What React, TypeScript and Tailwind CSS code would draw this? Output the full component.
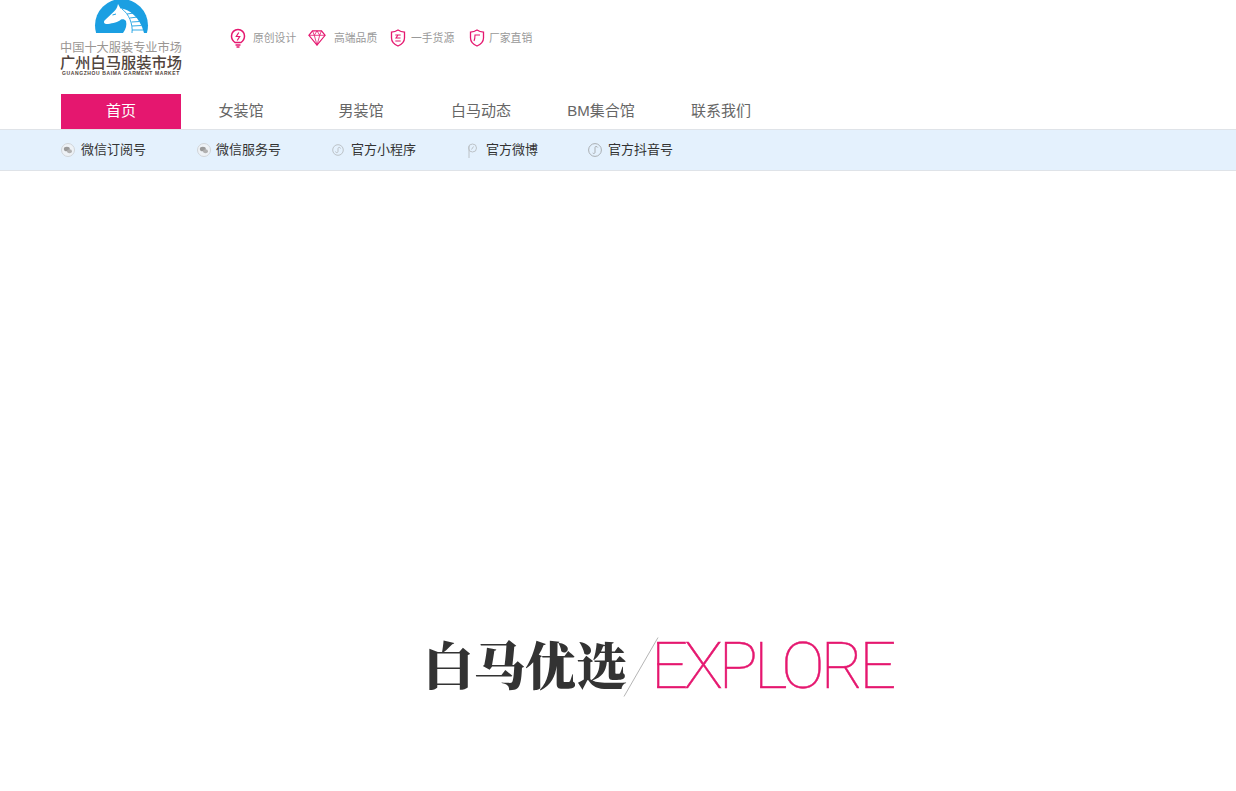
const sans = "font-['Liberation_Sans','Noto_Sans_CJK_SC',sans-serif]";

function Horse() {
  return (
    <svg width="62" height="33" viewBox="0 0 62 33" className="block">
      <circle cx="31.500" cy="25.500" r="26.500" fill="#1b9fe2" />
      <path d="M28 4l2.500 4.500C39 9 50 17 54 33H33c3-4 4-8 3-12-1.500-2-3-2-5-1.500-3 3-8 3.500-13 4.500-3 .5-5-1-3.500-3.500L24 11.500c2-2 3.500-4.500 4-7.500z" fill="#fff" />
      <path d="M32 9C39 14 43 24 42 33" stroke="#1b9fe2" strokeWidth="0.900" fill="none" />
      <path d="M37 14l7-1M40 18l7.500-1M41.500 22l8-.5M42 26l9.500-.5M42 30h11" stroke="#1b9fe2" strokeWidth="0.900" fill="none" />
      <path d="M22.500 15l3.500-1" stroke="#1b9fe2" strokeWidth="1" />
    </svg>
  );
}

function Bulb() {
  return (
    <svg width="16" height="20" viewBox="0 0 16 20" fill="none" stroke="#e5176f" strokeWidth="1.500">
      <path d="M5 14.500C3 13 1.500 11 1.500 8a6.500 6.500 0 0 1 13 0c0 3-1.500 5-3.500 6.500z" />
      <path d="M8.800 4.500 6.300 8.500h3.400L7.200 12.500" strokeWidth="1.200" />
      <path d="M5.500 17h5M6.500 19h3" />
    </svg>
  );
}

function Diamond() {
  return (
    <svg width="18" height="18" viewBox="0 0 20 18" fill="none" stroke="#e5176f" strokeWidth="1.300">
      <path d="M5 1h10l4 5-9 11L1 6z" />
      <path d="M1 6h18M5 1l2 5 3 11 3-11 2-5M7 6l3-5 3 5" strokeWidth=".9" />
    </svg>
  );
}

function Shield({ glyph }: { glyph: "e" | "c" }) {
  return (
    <svg width="16" height="18" viewBox="0 0 16 18" fill="none" stroke="#e5176f" strokeWidth="1.300">
      <path d="M8 1c2 1.300 4.300 2 6.500 2.200V9c0 3.500-2.800 6.300-6.500 8-3.700-1.700-6.500-4.500-6.500-8V3.200C3.700 3 6 2.300 8 1z" />
      {glyph === "e" ? (
        <path d="M5.300 6h5.400M8 6l-2 3h4.500M5.300 12h5.400" strokeWidth="1.100" />
      ) : (
        <path d="M11 6H6c0 2.500-.3 4.500-1 6" strokeWidth="1.100" />
      )}
    </svg>
  );
}

function Wechat() {
  return (
    <svg width="14" height="14" viewBox="0 0 14 14">
      <circle cx="7" cy="7" r="6.500" fill="#eef2f6" stroke="#d0d4d8" />
      <ellipse cx="5.800" cy="6" rx="3" ry="2.300" fill="#9a9a9a" />
      <ellipse cx="8.500" cy="8.300" rx="2.500" ry="2" fill="#b1b1b1" />
    </svg>
  );
}

function Mini() {
  return (
    <svg width="12" height="12" viewBox="0 0 12 12" fill="none" stroke="#bcc2c7">
      <circle cx="6" cy="6" r="5.300" />
      <path d="M3.500 7.500c0 1.500 2.500 1.500 2.500 0v-3c0-1.500 2.500-1.500 2.500 0" />
    </svg>
  );
}

function Weibo() {
  return (
    <svg width="10" height="15" viewBox="0 0 10 15" fill="none" stroke="#bcc2c7">
      <circle cx="5.500" cy="5" r="4" />
      <path d="M2 3v12" />
      <path d="M4.500 6.500 6.500 3.500" />
    </svg>
  );
}

function Tiktok() {
  return (
    <svg width="14" height="14" viewBox="0 0 14 14" fill="none" stroke="#a9aeb2">
      <circle cx="7" cy="7" r="6.400" />
      <path d="M8 3.500c-.7 0-1 .4-1 1v5c0 1-1.800 1.300-2.300.5M8 3.500c1 0 1.500.5 1.800 1" />
    </svg>
  );
}

const features = [
  { icon: <Bulb />, label: "原创设计", w: "w-[78px]", gap: "gap-[7px]" },
  { icon: <Diamond />, label: "高端品质", w: "w-[82px]", gap: "gap-[8px]" },
  { icon: <Shield glyph="e" />, label: "一手货源", w: "w-[79px]", gap: "gap-[5px]" },
  { icon: <Shield glyph="c" />, label: "厂家直销", w: "w-[70px]", gap: "gap-[4px]" },
];

const navs = ["首页", "女装馆", "男装馆", "白马动态", "BM集合馆", "联系我们"];

const subs = [
  { icon: <Wechat />, label: "微信订阅号", w: "w-[136px]", gap: "gap-[6px]" },
  { icon: <Wechat />, label: "微信服务号", w: "w-[135px]", gap: "gap-[5px]" },
  { icon: <Mini />, label: "官方小程序", w: "w-[135px]", gap: "gap-[7px]" },
  { icon: <Weibo />, label: "官方微博", w: "w-[121px]", gap: "gap-[9px]" },
  { icon: <Tiktok />, label: "官方抖音号", w: "w-[100px]", gap: "gap-[6px]" },
];

export default function App() {
  return (
    <div className={`min-h-[791px] bg-white overflow-hidden ${sans}`}>
      <header className="h-[94px] pl-[60px] flex items-start">
        <div className="w-[122px] flex flex-col items-center">
          <Horse />
          <div className="mt-[9px] text-[12.200px] leading-[13px] text-[#9a9693] whitespace-nowrap">中国十大服装专业市场</div>
          <div className="text-[15.250px] leading-[15px] font-medium text-[#51443d] whitespace-nowrap">广州白马服装市场</div>
          <div className="mt-[1px] text-[5px] leading-[5px] font-bold tracking-[0.600px] text-[#51443d] whitespace-nowrap">GUANGZHOU BAIMA GARMENT MARKET</div>
        </div>
        <div className="ml-[48px] mt-[28px] flex items-center h-[20px]">
          {features.map((f) => (
            <div key={f.label} className={`${f.w} flex items-center ${f.gap}`}>
              {f.icon}
              <span className="text-[10.800px] leading-[20px] text-[#999999]">{f.label}</span>
            </div>
          ))}
        </div>
      </header>

      <nav className="h-[35px] pl-[61px] flex">
        {navs.map((n, i) => (
          <a
            key={n}
            className={`w-[120px] h-[35px] flex items-center justify-center text-[15px] ${i === 0 ? "bg-[#e5176f] text-white" : "text-[#666666]"}`}
          >
            {n}
          </a>
        ))}
      </nav>

      <div className="h-[42px] bg-[#e4f1fd] border-y border-[#dfe3e8] pl-[61px] flex items-center">
        {subs.map((s) => (
          <div key={s.label} className={`${s.w} flex items-center ${s.gap}`}>
            {s.icon}
            <span className="text-[13px] text-[#333333] whitespace-nowrap">{s.label}</span>
          </div>
        ))}
      </div>

      <section className="mt-[460px] pl-[423px]">
        <div className="relative flex items-center h-[64px]">
          <h2 className="text-[51px] leading-[64px] font-black text-[#333333] font-['Noto_Serif_CJK_SC','Noto_Sans_CJK_SC',serif] whitespace-nowrap">白马优选</h2>
          <svg width="36" height="60" viewBox="0 0 36 60" className="absolute left-[200px] top-[6px]">
            <path d="M35 0.500 1 59.500" stroke="#b5b5b5" strokeWidth="1" />
          </svg>
          <span className="ml-[24px] mt-[6px] text-[65px] leading-[64px] font-thin tracking-[-4px] [-webkit-text-stroke:0.5px_#e5176f] text-[#e5176f] font-['Roboto',sans-serif]">EXPLORE</span>
        </div>
      </section>
    </div>
  );
}
